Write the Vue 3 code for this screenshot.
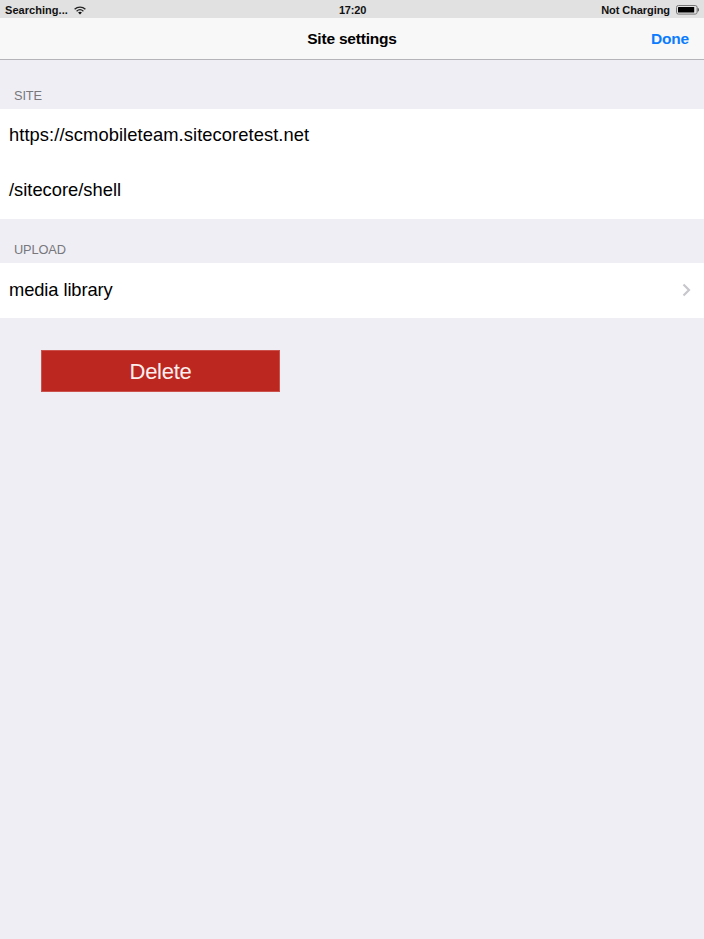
<script setup>
const groups = [
  { title: 'Site', rows: [{ text: 'https://scmobileteam.sitecoretest.net', cls: 'url' }, { text: '/sitecore/shell', cls: 'path' }] },
  { title: 'Upload', rows: [{ text: 'media library', cls: 'media', link: true }] },
]
</script>

<template>
  <div class="screen">
    <header class="status">
      <div class="side">
        <span class="carrier">Searching...</span>
        <svg class="wifi" width="12" height="9" viewBox="0 0 12 9" fill="none" stroke="#222" stroke-width="1.3">
          <path d="M.6 3.2C3.7.3 8.3.3 11.4 3.2" />
          <path d="M2.6 5.2C4.6 3.4 7.4 3.4 9.4 5.2" />
          <path d="M4.1 6.5C5.2 5.5 6.8 5.5 7.9 6.5L6 8.5Z" fill="#111" stroke="none" />
        </svg>
      </div>
      <span class="clock">17:20</span>
      <div class="side right">
        <span class="charging">Not Charging</span>
        <svg class="battery" width="24" height="10" viewBox="0 0 24 10">
          <rect x=".5" y=".5" width="20.6" height="8.6" rx="1.9" fill="none" stroke="#777" />
          <rect x="2" y="2" width="16.2" height="5.6" rx=".5" fill="#000" />
          <path d="M21.6 2.8C23.4 3.2 23.4 6.4 21.6 6.8Z" fill="#555" />
        </svg>
      </div>
    </header>
    <nav class="nav">
      <span></span>
      <h1>Site settings</h1>
      <a class="done">Done</a>
    </nav>
    <main>
      <section v-for="g in groups" :key="g.title">
        <h2>{{ g.title.toUpperCase() }}</h2>
        <div v-for="r in g.rows" :key="r.text" class="row" :class="r.cls">
          <span>{{ r.text }}</span>
          <svg v-if="r.link" width="9" height="14" viewBox="0 0 9 14" fill="none" stroke="#c7c7cc" stroke-width="2.2">
            <path d="M1.5 1.5L7 7L1.5 12.5" />
          </svg>
        </div>
      </section>
      <button>Delete</button>
    </main>
  </div>
</template>

<style>
body { background: #efeef4; }
</style>

<style scoped>
.screen {
  min-height: 939px;
  background: #efeef4;
  color: #000;
  font-family: "Liberation Sans", Arial, sans-serif;
}
.status {
  box-sizing: border-box;
  height: 18px;
  padding: 1px 4px 0 5px;
  display: grid;
  grid-template-columns: 1fr auto 1fr;
  align-items: center;
  background: #e1e1e1;
  font-size: 11px;
  font-weight: 700;
  line-height: 18px;
  color: #111;
}
.side { display: flex; align-items: center; gap: 6px; }
.carrier { letter-spacing: .04px; }
.charging { letter-spacing: -.07px; }
.clock { letter-spacing: -.2px; }
.right { justify-content: flex-end; }
.nav {
  box-sizing: border-box;
  height: 42px;
  padding: 0 15px;
  border-bottom: 1px solid #b5b4b9;
  display: grid;
  grid-template-columns: 1fr auto 1fr;
  align-items: center;
  background: #f8f8f8;
  font-weight: 700;
  font-size: 15.5px;
}
h1 { margin: 0; font-size: inherit; letter-spacing: -.2px; }
.done { justify-self: end; letter-spacing: -.2px; color: #0b7cff; }
section h2 {
  box-sizing: border-box;
  height: 44px;
  margin: 0;
  padding: 22px 14px 0;
  font-size: 12.8px;
  letter-spacing: -.15px;
  line-height: 18px;
  font-weight: 400;
  color: #77777c;
}
section:first-child h2 { height: 49px; padding-top: 27px; }
.row {
  box-sizing: border-box;
  height: 55px;
  padding: 0 13px 3px 9px;
  display: flex;
  align-items: center;
  justify-content: space-between;
  background: #fff;
  font-size: 18.33px;
}
.url { letter-spacing: .075px; }
.media { padding-bottom: 1px; letter-spacing: -.1px; }
button {
  display: block;
  width: 239px;
  height: 42px;
  margin: 32px 0 0 41px;
  padding: 1px 0 0;
  border: 1px solid #cb514c;
  background: #bc2820;
  color: #fbeeee;
  font: 22px/40px "Liberation Sans", Arial, sans-serif;
  letter-spacing: -.3px;
}
</style>
